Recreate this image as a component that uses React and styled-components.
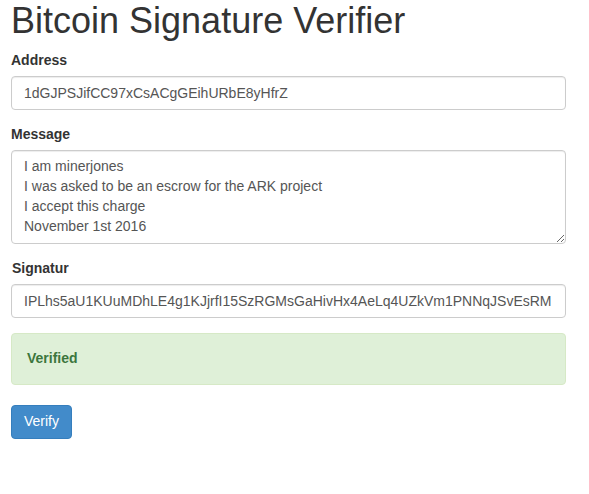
import styled, { createGlobalStyle } from "styled-components";

const GlobalStyle = createGlobalStyle`
   * {
      box-sizing: border-box;
   }

   body {
      margin: 0;
      background: #fff;
      color: #333;
      font-family: "Liberation Sans", Arial, sans-serif;
      font-size: 14px;
      line-height: 1.42857;
   }
`;

const Page = styled.div`
   width: 555px;
   margin-left: 11px;
`;

const Title = styled.h1`
   font-size: 36px;
   font-weight: 500;
   line-height: 1.1;
   margin: 1px 0 10px;
   color: #333;
`;

const FormGroup = styled.div`
   margin-bottom: 15px;
`;

const Label = styled.label`
   display: inline-block;
   margin-bottom: 5px;
   margin-left: ${({ $shift }) => $shift || 0}px;
   font-weight: 700;
`;

const fieldStyles = `
   display: block;
   width: 100%;
   padding: 6px 12px;
   font-family: "Liberation Sans", Arial, sans-serif;
   font-size: 14px;
   line-height: 1.42857;
   color: #555;
   background: #fff;
   border: 1px solid #ccc;
   border-radius: 4px;
   box-shadow: inset 0 1px 1px rgba(0, 0, 0, 0.075);
   outline: none;
`;

const Input = styled.input`
   ${fieldStyles}
   height: 34px;
`;

const TextArea = styled.textarea`
   ${fieldStyles}
   height: 94px;
   resize: vertical;
`;

const Alert = styled.div`
   margin-top: 15px;
   margin-bottom: 20px;
   padding: 15px 15px 15px;
   background: #dff0d8;
   border: 1px solid #d6e9c6;
   border-radius: 4px;
   color: #3c763d;
   font-weight: 700;
`;

const Button = styled.button`
   display: inline-block;
   padding: 6px 12px;
   font-family: "Liberation Sans", Arial, sans-serif;
   font-size: 14px;
   line-height: 1.42857;
   color: #fff;
   background: #428bca;
   border: 1px solid #357ebd;
   border-radius: 4px;
   cursor: pointer;
`;

const message = `I am minerjones
I was asked to be an escrow for the ARK project
I accept this charge
November 1st 2016`;

function App() {
   return (
      <>
         <GlobalStyle />
         <Page>
            <Title>Bitcoin Signature Verifier</Title>

            <FormGroup>
               <Label>Address</Label>
               <Input readOnly value="1dGJPSJifCC97xCsACgGEihURbE8yHfrZ" />
            </FormGroup>

            <FormGroup>
               <Label>Message</Label>
               <TextArea readOnly rows={4} value={message} />
            </FormGroup>

            <FormGroup>
               <Label $shift={1}>Signatur</Label>
               <Input readOnly value="IPLhs5aU1KUuMDhLE4g1KJjrfI15SzRGMsGaHivHx4AeLq4UZkVm1PNNqJSvEsRM" />
            </FormGroup>

            <Alert>Verified</Alert>

            <Button>Verify</Button>
         </Page>
      </>
   );
}

export default App;
